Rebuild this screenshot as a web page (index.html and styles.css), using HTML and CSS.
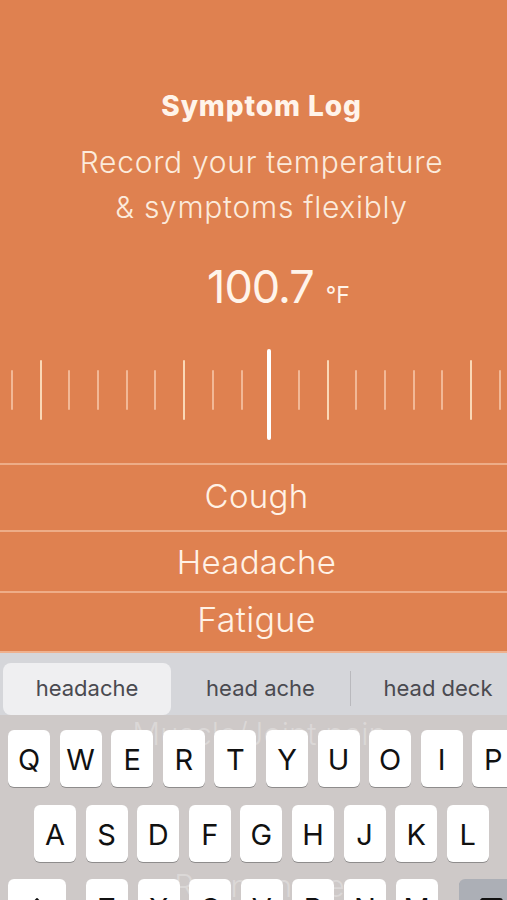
FILE: index.html
```html
<!DOCTYPE html>
<html lang="en">
<head>
<meta charset="utf-8">
<title>Symptom Log</title>
<link rel="stylesheet" href="styles.css">
</head>
<body>
<div class="screen">
  <section class="hero">
    <h1 class="title">Symptom Log</h1>
    <p class="subtitle">Record your temperature<br>&amp; symptoms flexibly</p>
    <div class="reading"><span class="value">100.7</span><span class="unit">°F</span></div>
    <div class="ruler">
      <span class="tick"></span><span class="tick long"></span><span class="tick"></span><span class="tick"></span><span class="tick"></span><span class="tick"></span><span class="tick long"></span><span class="tick"></span><span class="tick"></span><span class="tick"></span><span class="tick"></span><span class="tick long"></span><span class="tick"></span><span class="tick"></span><span class="tick"></span><span class="tick"></span><span class="tick long"></span><span class="tick"></span>
      <span class="needle"></span>
    </div>
    <ul class="symptoms">
      <li class="row row-first">Cough</li>
      <li class="row row-mid">Headache</li>
      <li class="row row-last">Fatigue</li>
    </ul>
  </section>
  <section class="keyboard">
    <div class="suggestions">
      <div class="sugg sugg-active">headache</div>
      <div class="sugg">head ache</div>
      <div class="divider"></div>
      <div class="sugg sugg-wide">head deck</div>
    </div>
    <div class="keys">
      <div class="ghost">
        <span class="ghost-line ghost-1">Muscle/Joint pain</span>
        <span class="ghost-line ghost-2">Runny nose</span>
      </div>
      <div class="krow krow-1">
        <span class="key">Q</span><span class="key">W</span><span class="key">E</span><span class="key">R</span><span class="key">T</span><span class="key">Y</span><span class="key">U</span><span class="key">O</span><span class="key">I</span><span class="key">P</span>
      </div>
      <div class="krow krow-2">
        <span class="key">A</span><span class="key">S</span><span class="key">D</span><span class="key">F</span><span class="key">G</span><span class="key">H</span><span class="key">J</span><span class="key">K</span><span class="key">L</span>
      </div>
      <div class="krow krow-3">
        <span class="key key-shift"><svg width="24" height="22" viewBox="0 0 24 22"><path d="M12 2 L22 12 H16.5 V20 H7.5 V12 H2 Z" fill="none" stroke="#111" stroke-width="1.8" stroke-linejoin="round"/></svg></span>
        <span class="key">Z</span><span class="key">X</span><span class="key">C</span><span class="key">V</span><span class="key">B</span><span class="key">N</span><span class="key">M</span>
        <span class="key key-back"><svg width="30" height="22" viewBox="0 0 30 22"><path d="M9 2 H27 a2 2 0 0 1 2 2 V18 a2 2 0 0 1 -2 2 H9 L1 11 Z" fill="none" stroke="#111" stroke-width="1.8" stroke-linejoin="round"/></svg></span>
      </div>
    </div>
  </section>
</div>
</body>
</html>
```

FILE: styles.css
```css
* { box-sizing: border-box; }
html, body { margin: 0; padding: 0; }
body {
  width: 507px;
  height: 900px;
  overflow: hidden;
  font-family: Inter, "Liberation Sans", sans-serif;
  background: #DF8150;
}
.screen {
  width: 507px;
  height: 900px;
  overflow: hidden;
  display: flex;
  flex-direction: column;
}
.hero {
  background: #DF8150;
  color: #FFF4EA;
  display: flex;
  flex-direction: column;
  align-items: center;
  padding-top: 89px;
  flex: none;
}
.title {
  margin: 0;
  padding-left: 16px;
  font-size: 28px;
  line-height: 34px;
  font-weight: 800;
  letter-spacing: 0.9px;
}
.subtitle {
  margin: 17px 0 0;
  padding-left: 16px;
  font-size: 30px;
  line-height: 45px;
  font-weight: 300;
  letter-spacing: 0.7px;
  text-align: center;
  color: #FCEBDC;
}
.reading {
  margin-top: 32px;
  height: 50px;
  display: flex;
  align-items: baseline;
  gap: 12px;
  padding-left: 50px;
}
.value {
  font-size: 45px;
  line-height: 50px;
  font-weight: 400;
  letter-spacing: -1px;
}
.unit {
  font-size: 23px;
  line-height: 50px;
  font-weight: 400;
}
.ruler {
  position: relative;
  margin-top: 28px;
  width: 507px;
  height: 100px;
  display: flex;
  align-items: center;
  gap: 26.7px;
  padding-left: 11px;
}
.tick {
  flex: none;
  width: 2px;
  height: 40px;
  border-radius: 1px;
  background: rgba(255, 222, 196, 0.6);
}
.tick.long {
  height: 60px;
  background: rgba(255, 232, 200, 0.85);
}
.needle {
  position: absolute;
  left: 267px;
  top: 9px;
  width: 4px;
  height: 91px;
  border-radius: 2px;
  background: #FFFFFF;
}
.symptoms {
  list-style: none;
  margin: 23px 0 0;
  padding: 0;
  width: 507px;
}
.row {
  display: flex;
  align-items: center;
  justify-content: center;
  padding-left: 6px;
  border-top: 2px solid rgba(255, 226, 204, 0.45);
  font-weight: 300;
  letter-spacing: 0.3px;
  color: #FFF2E6;
}
.row-first { height: 67px; font-size: 33px; padding-bottom: 3px; }
.row-mid { height: 61px; font-size: 33px; }
.row-last {
  height: 62px;
  font-size: 34px;
  padding-bottom: 6px;
  border-bottom: 2px solid rgba(255, 226, 204, 0.5);
}
.keyboard {
  flex: 1;
  background: #CEC9C8;
  display: flex;
  flex-direction: column;
}
.suggestions {
  height: 62px;
  background: #D5D6DA;
  display: flex;
  align-items: stretch;
  padding: 10px 0 0 3px;
  white-space: nowrap;
}
.sugg {
  flex: none;
  width: 168px;
  display: flex;
  align-items: center;
  justify-content: center;
  font-size: 22px;
  color: #4A4A50;
  font-family: Inter, "Liberation Sans", sans-serif;
  padding-bottom: 2px;
}
.sugg-active {
  background: #EFEFF1;
  border-radius: 8px;
}
.sugg:nth-child(2) { width: 179px; }
.divider {
  flex: none;
  width: 1px;
  height: 35px;
  background: #B9B9BD;
  align-self: center;
  margin-top: -1px;
}
.sugg-wide { width: 174px; }
.keys {
  position: relative;
  flex: 1;
  padding-top: 15px;
  display: flex;
  flex-direction: column;
  gap: 18px;
}
.ghost {
  position: absolute;
  inset: 0;
  pointer-events: none;
}
.ghost-line {
  position: absolute;
  left: 0;
  right: 0;
  text-align: center;
  font-size: 31px;
  font-weight: 300;
  color: rgba(255, 255, 255, 0.28);
  padding-left: 12px;
}
.ghost-1 { top: 0px; }
.ghost-2 { top: 152px; }
.krow {
  position: relative;
  display: flex;
  gap: 9.6px;
  height: 57px;
  flex: none;
}
.krow-1 { padding-left: 8px; }
.krow-2 { padding-left: 34px; }
.krow-3 { padding-left: 8px; margin-top: -1px; }
.key {
  flex: none;
  width: 42px;
  height: 57px;
  background: #FFFFFF;
  border-radius: 6px;
  box-shadow: 0 1px 0 #8E8C8C;
  display: flex;
  align-items: center;
  justify-content: center;
  font-size: 29px;
  font-weight: 400;
  color: #111111;
  padding-top: 1px;
}
.key-shift {
  width: 58px;
  margin-right: 10.4px;
}
.key-back {
  width: 58px;
  margin-left: 11.4px;
  background: #ACAFB6;
}
```
